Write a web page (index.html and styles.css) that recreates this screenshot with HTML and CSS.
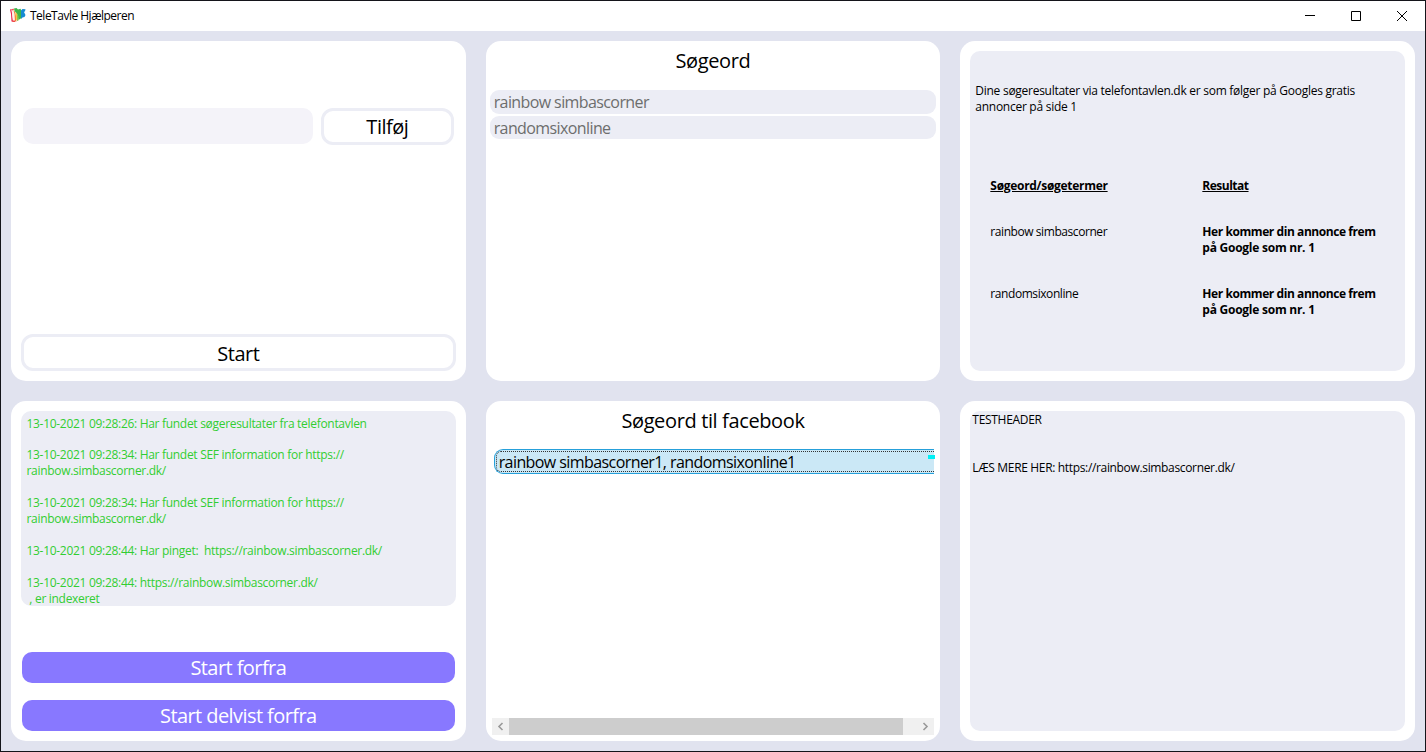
FILE: index.html
```html
<!DOCTYPE html>
<html lang="da">
<head>
<meta charset="utf-8">
<title>TeleTavle Hjælperen</title>
<link rel="stylesheet" href="styles.css">
</head>
<body>
<div class="window">
  <header class="titlebar">
    <svg class="logo" width="16" height="15" viewBox="0 0 16 15">
      <path d="M0 1.500 1.500 1 2 4l1 9.500H1.500L1 6z" fill="#e8204c"/>
      <path d="M1.500 2 3.500 1.500 5 4.500 5.500 13H3z" fill="#fdf3e6"/>
      <path d="M1.500 1.500 3.500.5 4 2 2 2.500zM2 12.500h3V14H2.500z" fill="#ee4a4a"/>
      <path d="M3.500 2.500 5 3.500 6 8l.5 5.500H5L4.500 6z" fill="#f47b3a"/>
      <path d="M5.500 4 7 5v7H6z" fill="#f8c24a"/>
      <path d="M4 .5 6.500 0 8 1.500 10.500.8 11.500 3v7L8.500 12 7 5.500 4.500 3z" fill="#3cb54a"/>
      <path d="M7 6 8.500 8v4.500L7 13z" fill="#8cc34a"/>
      <path d="M11 2.500 12.500 1l3 .3-.5 2L14 4l1.500 3-1 2-2 .5L11 11z" fill="#168bd2"/>
    </svg>
    <span class="app-name">TeleTavle Hjælperen</span>
    <div class="controls">
      <svg width="10" height="10" viewBox="0 0 10 10"><path d="M0 4.500H10" stroke="#000"/></svg>
      <svg width="10" height="10" viewBox="0 0 10 10"><path d="M.5.5h9v9h-9z" fill="none" stroke="#000"/></svg>
      <svg width="10" height="10" viewBox="0 0 10 10"><path d="M0 0 10 10M10 0 0 10" stroke="#000"/></svg>
    </div>
  </header>
  <main class="grid">
    <section class="panel panel-entry">
      <div class="entry-row">
        <input class="field" type="text" aria-label="Søgeord">
        <button class="btn outline add">Tilføj</button>
      </div>
      <button class="btn outline start">Start</button>
    </section>

    <section class="panel">
      <h2 class="heading">Søgeord</h2>
      <ul class="words">
        <li class="word">rainbow simbascorner</li>
        <li class="word">randomsixonline</li>
      </ul>
    </section>

    <section class="panel panel-box">
      <div class="box results">
        <p class="intro">Dine søgeresultater via telefontavlen.dk er som følger på Googles gratis<br>annoncer på side 1</p>
        <div class="table">
          <b class="th">Søgeord/søgetermer</b><b class="th th-result">Resultat</b>
          <span>rainbow simbascorner</span><b>Her kommer din annonce frem<br><span class="place">på Google som nr. 1</span></b>
          <span>randomsixonline</span><b>Her kommer din annonce frem<br><span class="place">på Google som nr. 1</span></b>
        </div>
      </div>
    </section>

    <section class="panel panel-box panel-log">
      <div class="box log">
        <p class="first">13-10-2021 09:28:26: Har fundet søgeresultater fra telefontavlen</p>
        <p>13-10-2021 09:28:34: Har fundet SEF information for https://<br>rainbow.simbascorner.dk/</p>
        <p>13-10-2021 09:28:34: Har fundet SEF information for https://<br>rainbow.simbascorner.dk/</p>
        <p>13-10-2021 09:28:44: Har pinget:  https://rainbow.simbascorner.dk/</p>
        <p>13-10-2021 09:28:44: https://rainbow.simbascorner.dk/<br> , er indexeret</p>
      </div>
      <div class="restart">
        <button class="btn solid">Start forfra</button>
        <button class="btn solid">Start delvist forfra</button>
      </div>
    </section>

    <section class="panel panel-facebook">
      <h2 class="heading">Søgeord til facebook</h2>
      <div class="selected">
        <div class="focus">rainbow simbascorner1, randomsixonline1</div>
        <i class="marker"></i>
      </div>
      <div class="scrollbar">
        <svg class="arrow" width="17" height="17" viewBox="0 0 17 17"><path d="M10.500 5 7 8.500 10.500 12" fill="none" stroke="#999" stroke-width="1.600"/></svg>
        <div class="thumb"></div>
        <svg class="arrow" width="17" height="17" viewBox="0 0 17 17"><path d="M6.500 5 10 8.500 6.500 12" fill="none" stroke="#999" stroke-width="1.600"/></svg>
      </div>
    </section>

    <section class="panel panel-box">
      <div class="box preview">
        <p>TESTHEADER</p>
        <p class="more">LÆS MERE HER: https://rainbow.simbascorner.dk/</p>
      </div>
    </section>
  </main>
</div>
</body>
</html>
```
FILE: styles.css
```css
* { box-sizing: border-box; }
body, h2, p, ul { margin: 0; padding: 0; }
body {
  font: 12px/16px "Segoe UI", "Open Sans", "Noto Sans", sans-serif;
  letter-spacing: -0.3px;
  color: #000;
}
.window {
  width: 1426px;
  height: 752px;
  display: flex;
  flex-direction: column;
  border: 1px solid #14141a;
  background: #e1e3ef;
  overflow: hidden;
}
.titlebar {
  flex: 0 0 30px;
  display: flex;
  align-items: center;
  padding: 0 18px 0 9px;
  background: #fff;
}
.logo { margin: 0 4px 1px 0; }
.app-name { letter-spacing: -0.5px; }
.controls { display: flex; gap: 36px; margin-left: auto; }
.grid {
  flex: 1;
  display: grid;
  grid-template-columns: repeat(3, 1fr);
  grid-template-rows: repeat(2, 340px);
  gap: 20px;
  padding: 10px;
}
.panel {
  display: flex;
  flex-direction: column;
  min-width: 0;
  border-radius: 15px;
  background: #fff;
  overflow: hidden;
}
.panel-entry { padding: 67px 10px 10px; justify-content: space-between; }
.entry-row { display: flex; gap: 8px; padding: 0 2px; }
.field {
  width: 290px;
  height: 36px;
  border: 0;
  border-radius: 10px;
  background: #f4f3f9;
}
.btn {
  font: 20px/24px "Segoe UI", "Open Sans", "Noto Sans", sans-serif;
  padding: 0;
  border: 0;
  border-radius: 10px;
}
.outline {
  height: 37px;
  border: 3px solid #ecedf5;
  border-radius: 12px;
  background: #fff;
  color: #000;
  letter-spacing: -0.5px;
}
.add { flex: 1; }
.start { padding-top: 2px; }
.solid { height: 31px; background: #8878ff; color: #fff; letter-spacing: -0.57px; }
.heading {
  padding-top: 7px;
  font-size: 20px;
  line-height: 26px;
  font-weight: 400;
  letter-spacing: -0.37px;
  text-align: center;
}
.words {
  display: grid;
  gap: 2px;
  margin: 16px 4px 0;
  list-style: none;
}
.word {
  height: 24px;
  padding-left: 4px;
  border-radius: 9px;
  background: #ecedf5;
  color: #6d6d6d;
  font-size: 16px;
  line-height: 24px;
  letter-spacing: -0.6px;
}
.word + .word { height: 23px; }
.panel-box { padding: 10px; }
.box { border-radius: 10px; background: #ecedf5; overflow: hidden; }
.results { flex: 1; padding: 32px 5px; }
.intro { letter-spacing: -0.27px; }
.table {
  display: grid;
  grid-template-columns: 212px 1fr;
  row-gap: 30px;
  padding: 63px 0 0 15px;
  letter-spacing: -0.43px;
}
.th { text-decoration: underline; justify-self: start; letter-spacing: -0.3px; }
.th-result { letter-spacing: -0.5px; }
.place { letter-spacing: -0.25px; }
.log {
  height: 195px;
  padding: 5px 5px 0 5.500px;
  color: #32cd32;
  letter-spacing: -0.3px;
}
.log p { margin-bottom: 16px; white-space: pre-wrap; }
.log .first { margin-bottom: 15px; }
.restart { display: grid; gap: 17px; padding: 46px 1px 0; }
.panel-facebook { padding: 0 6px 6px; }
.selected {
  position: relative;
  height: 25px;
  margin: 15px 0 0 2px;
  padding: 1px 0 1px 1px;
  border: 1px solid #26a0da;
  border-right: 0;
  border-radius: 9px 0 0 9px;
  background: #cbe8f6;
}
.focus {
  height: 21px;
  padding-left: 2px;
  border: 1px dotted #333;
  border-right: 0;
  border-radius: 5px 0 0 5px;
  font-size: 16px;
  line-height: 20px;
  letter-spacing: -0.58px;
}
.marker { position: absolute; right: -1px; top: 5px; width: 7px; height: 4px; background: #00f0f5; }
.scrollbar {
  display: flex;
  height: 17px;
  margin-top: auto;
  background: #f0f0f0;
}
.thumb { width: 394px; background: #cdcdcd; }
.arrow:last-child { margin-left: auto; }
.preview { flex: 1; padding: 1px 2px; }
.more { margin-top: 32px; letter-spacing: -0.34px; }
```
